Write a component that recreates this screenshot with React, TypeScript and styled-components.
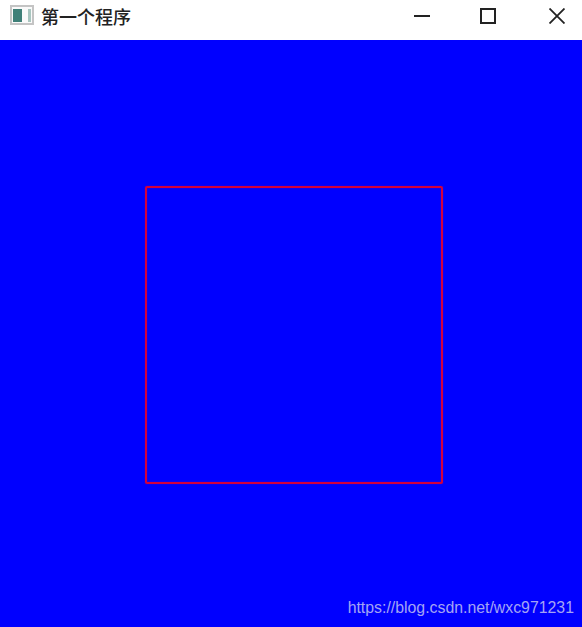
import React from "react";
import styled, { createGlobalStyle } from "styled-components";

const GlobalStyle = createGlobalStyle`
  html, body {
    margin: 0;
    padding: 0;
    background: #0000ff;
  }
`;

const Window = styled.div`
  position: relative;
  width: 582px;
  height: 627px;
  display: flex;
  flex-direction: column;
  overflow: hidden;
`;

const TitleBar = styled.header`
  height: 40px;
  box-sizing: border-box;
  flex-shrink: 0;
  background: #ffffff;
  display: flex;
  align-items: center;
  padding: 0 0 0 10px;
`;

const AppIcon = styled.svg`
  width: 24px;
  height: 20px;
  margin-right: 7px;
  margin-top: -10px;
`;

const Title = styled.span`
  font-family: "Noto Sans CJK SC", sans-serif;
  font-size: 18px;
  font-weight: 500;
  color: #222222;
  flex: 1;
  margin-top: -9px;
  line-height: 24px;
`;

const Controls = styled.div`
  display: flex;
  gap: 16px;
  margin-top: -8px;
`;

const ControlButton = styled.div<{ $shift?: number }>`
  width: 50px;
  height: 24px;
  margin-left: ${(props) => props.$shift || 0}px;
  display: flex;
  align-items: center;
  justify-content: center;
`;

const Canvas = styled.main`
  flex: 1;
  background: #0000ff;
  padding: 146px 0 0 145px;
`;

const Rect = styled.div`
  width: 298px;
  height: 298px;
  box-sizing: border-box;
  border: 2px solid #d4003c;
  border-radius: 2px;
  box-shadow: 0 0 1px #a0006a, inset 0 0 1px #a0006a;
`;

const Watermark = styled.span`
  position: absolute;
  right: 8px;
  bottom: 9px;
  font-family: "Liberation Sans", Arial, sans-serif;
  font-size: 15.85px;
  line-height: 20px;
  color: #a4a4f4;
`;

export default function App() {
  return (
    <Window>
      <GlobalStyle />
      <TitleBar>
        <AppIcon viewBox="0 0 24 20">
          <rect x="1" y="1" width="22" height="18" fill="#fafafa" stroke="#c4c4c4" strokeWidth="2" />
          <rect x="3" y="4" width="9" height="13" fill="#3f8078" />
          <rect x="18" y="4" width="3" height="13" fill="#a9c6c0" />
        </AppIcon>
        <Title>第一个程序</Title>
        <Controls>
          <ControlButton>
            <svg width="16" height="16" viewBox="0 0 16 16">
              <path d="M0 8H16" stroke="#222" strokeWidth="2" />
            </svg>
          </ControlButton>
          <ControlButton>
            <svg width="16" height="16" viewBox="0 0 16 16">
              <rect x="1" y="1" width="14" height="14" fill="none" stroke="#222" strokeWidth="2" />
            </svg>
          </ControlButton>
          <ControlButton $shift={3}>
            <svg width="16" height="16" viewBox="0 0 16 16">
              <path d="M0.5 0.5L15.5 15.5M15.5 0.5L0.5 15.5" stroke="#222" strokeWidth="1.8" />
            </svg>
          </ControlButton>
        </Controls>
      </TitleBar>
      <Canvas>
        <Rect />
      </Canvas>
      <Watermark>https://blog.csdn.net/wxc971231</Watermark>
    </Window>
  );
}
